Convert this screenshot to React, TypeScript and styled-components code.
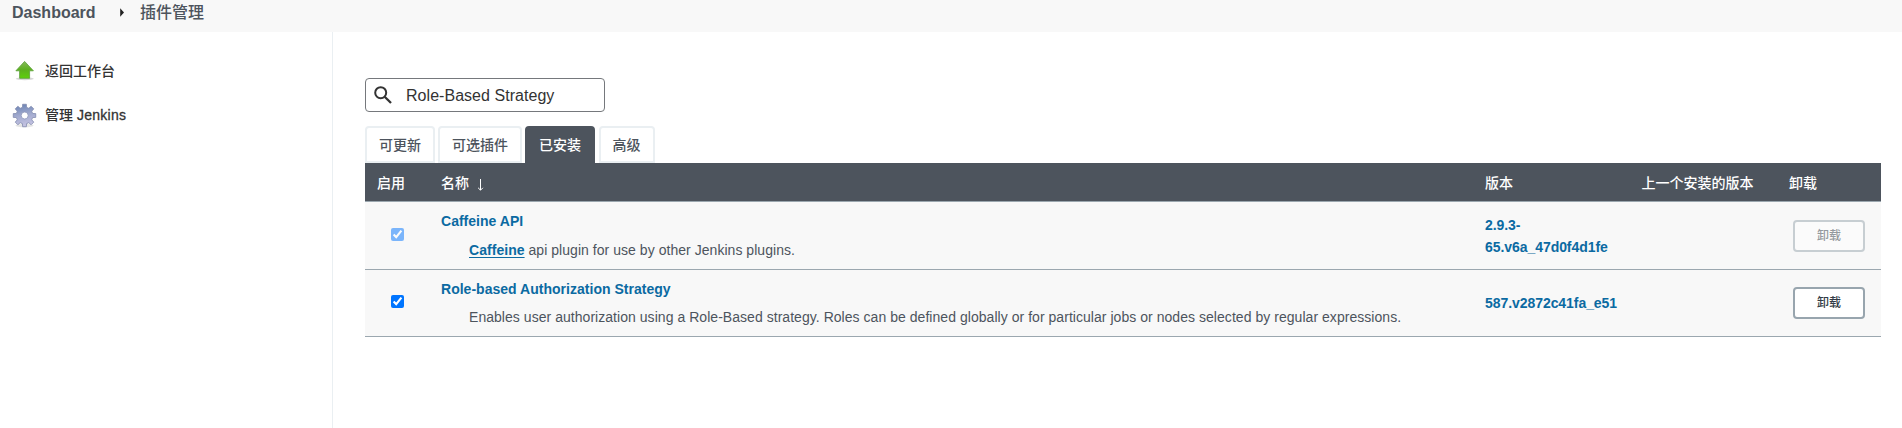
import React from 'react';
import styled, { createGlobalStyle } from 'styled-components';

const GlobalStyle = createGlobalStyle`
  *, *::before, *::after { box-sizing: border-box; }
  body {
    margin: 0;
    background: #fff;
    color: #4d545d;
    font-family: "Liberation Sans", "Noto Sans CJK SC", sans-serif;
    font-size: 14px;
    line-height: 22px;
  }
`;

const Page = styled.div`
  height: 428px;
  display: flex;
  flex-direction: column;
  overflow: hidden;
`;

const Breadcrumbs = styled.nav`
  height: 32px;
  flex: none;
  background: #f8f8f8;
  display: flex;
  align-items: flex-start;
  padding: 1px 0 0 12px;
  font-size: 16px;
  line-height: 24px;
  color: #4d545d;
`;

const Crumb = styled.span<{ $w: number; $strong?: boolean }>`
  width: ${(p) => p.$w}px;
  font-weight: ${(p) => (p.$strong ? 700 : 500)};
  white-space: nowrap;
`;

const Separator = styled.svg`
  margin: 7px 15px 0 25px;
  width: 5px;
  height: 9px;
`;

const Body = styled.div`
  flex: 1;
  display: flex;
`;

const Sidebar = styled.aside`
  width: 333px;
  flex: none;
  border-right: 1px solid #eaeff2;
  padding: 26px 0 0 12px;
`;

const Task = styled.a`
  display: flex;
  align-items: center;
  height: 26px;
  margin-bottom: 18px;
  color: #333;
  font-weight: 500;
  svg { width: 25px; height: 25px; margin-right: 8px; }
`;

const Latin = styled.span`
  letter-spacing: 0.28px;
  -webkit-text-stroke: 0.3px currentColor;
`;

const Main = styled.main`
  flex: 1;
  padding: 46px 21px 0 32px;
`;

const SearchBox = styled.label`
  width: 240px;
  height: 34px;
  border: 1px solid #75787c;
  border-radius: 4px;
  display: flex;
  align-items: center;
  padding-left: 8px;
  svg { width: 18px; height: 18px; flex: none; margin: 0 14px 1px 0; }
`;

const SearchInput = styled.input`
  width: 180px;
  border: 0;
  outline: 0;
  padding: 2px 0 0;
  background: none;
  color: #333;
  font: 16px/24px "Liberation Sans", sans-serif;
  letter-spacing: 0.04px;
`;

const Tabs = styled.div`
  display: flex;
  align-items: flex-end;
  gap: 3px;
  height: 37px;
  margin-top: 14px;
`;

const Tab = styled.a<{ $w: number; $active?: boolean }>`
  width: ${(p) => p.$w}px;
  height: 37px;
  display: flex;
  justify-content: center;
  align-items: center;
  border: 2px solid ${(p) => (p.$active ? '#4d545d' : '#eaeff2')};
  border-radius: 4px 4px 0 0;
  background: ${(p) => (p.$active ? '#4d545d' : '#fff')};
  color: ${(p) => (p.$active ? '#fff' : '#4d545d')};
  font-weight: 500;
  &:last-child { margin-left: 1px; padding-right: 1px; }
`;

const Table = styled.div`
  width: 1516px;
`;

const Row = styled.div<{ $h: number; $head?: boolean }>`
  display: grid;
  grid-template-columns: 76px 1044px 156.5px 147.5px 92px;
  align-items: center;
  height: ${(p) => p.$h}px;
  padding-top: ${(p) => (p.$head ? 2 : 0)}px;
  border-bottom: 1px solid #9ba7af;
  background: ${(p) => (p.$head ? '#4d545d' : '#f8f8f8')};
  color: ${(p) => (p.$head ? '#fff' : '#4d545d')};
  font-weight: ${(p) => (p.$head ? 500 : 400)};
`;

const EnableHead = styled.span`
  padding-left: 12px;
`;

const NameHead = styled.span`
  display: flex;
  align-items: center;
  svg { width: 7px; height: 12px; margin: 3px 0 0 8px; }
`;

const Check = styled.input<{ $dim?: boolean }>`
  width: 13px;
  height: 13px;
  margin: 0 0 ${(p) => (p.$dim ? 2 : 3)}px 26px;
  opacity: ${(p) => (p.$dim ? 0.5 : 1)};
`;

const PluginName = styled.a`
  display: block;
  color: #0b6aa2;
  font-weight: 700;
  letter-spacing: 0.02px;
`;

const Description = styled.div<{ $gap: number }>`
  margin: ${(p) => p.$gap}px 0 0 28px;
  white-space: nowrap;
  letter-spacing: 0.042px;
  a {
    color: #0b6aa2;
    font-weight: 700;
    text-decoration: underline;
    text-underline-offset: 2px;
  }
`;

const Version = styled.a`
  color: #0b6aa2;
  font-weight: 700;
  white-space: nowrap;
  letter-spacing: -0.06px;
`;

const Uninstall = styled.button`
  width: 72px;
  height: 32px;
  margin-left: 4px;
  padding: 0;
  border: 2px solid #98a5ae;
  border-radius: 4px;
  background: #fff;
  color: #333c46;
  font: 500 12px/20px "Liberation Sans", "Noto Sans CJK SC", sans-serif;
  &:disabled { opacity: 0.5; }
`;

const UpIcon = () => (
  <svg viewBox="0 0 25 25">
    <defs>
      <linearGradient id="up" x1="0" y1="0" x2="0" y2="1">
        <stop offset="0" stopColor="#86b95a" />
        <stop offset=".5" stopColor="#5cb01f" />
        <stop offset="1" stopColor="#5ed00c" />
      </linearGradient>
    </defs>
    <ellipse cx="12.8" cy="19.8" rx="9" ry="1.5" fill="#000" opacity=".16" />
    <path d="M12.6 2.4 L21.4 11.8 H17.6 V19.3 H7.6 V11.8 H3.9Z" fill="url(#up)" stroke="#5a9f38" strokeWidth=".8" strokeLinejoin="round" />
  </svg>
);

const polar = (radius: number, degrees: number) => {
  const a = (degrees * Math.PI) / 180;
  return `${(12.5 + radius * Math.sin(a)).toFixed(2)} ${(12.5 - radius * Math.cos(a)).toFixed(2)}`;
};

const gearPath =
  'M' +
  [0, 45, 90, 135, 180, 225, 270, 315]
    .map((t) => [polar(8.4, t - 14), polar(11.4, t - 9.5), polar(11.4, t + 9.5), polar(8.4, t + 14)].join(' L'))
    .join(' L') +
  'Z';

const GearIcon = () => (
  <svg viewBox="0 0 25 25">
    <defs>
      <linearGradient id="gear" x1=".4" y1="0" x2=".6" y2="1">
        <stop offset="0" stopColor="#6d85b5" />
        <stop offset=".45" stopColor="#a0a9ce" />
        <stop offset="1" stopColor="#c9c6e4" />
      </linearGradient>
    </defs>
    <ellipse cx="12.5" cy="22.5" rx="9" ry="1.8" fill="#000" opacity=".1" />
    <path d={gearPath} fill="url(#gear)" stroke="#838cae" strokeWidth=".8" strokeLinejoin="round" />
    <circle cx="12.7" cy="12.5" r="3.5" fill="#fff" stroke="#8b94b9" strokeWidth=".8" />
  </svg>
);

export default function App() {
  return (
    <Page>
      <GlobalStyle />
      <Breadcrumbs>
        <Crumb $w={83} $strong>Dashboard</Crumb>
        <Separator viewBox="0 0 5 9"><path d="M.2 .3 L4 4.5 L.2 8.7Z" fill="#222" /></Separator>
        <Crumb $w={64}>插件管理</Crumb>
      </Breadcrumbs>
      <Body>
        <Sidebar>
          <Task><UpIcon />返回工作台</Task>
          <Task><GearIcon /><span>管理 <Latin>Jenkins</Latin></span></Task>
        </Sidebar>
        <Main>
          <SearchBox>
            <svg viewBox="0 0 18 18" fill="none" stroke="#333" strokeWidth="2">
              <circle cx="6.7" cy="6.7" r="5.5" />
              <path d="M10.7 10.7 L17 17" strokeWidth="2.3" />
            </svg>
            <SearchInput defaultValue="Role-Based Strategy" />
          </SearchBox>
          <Tabs>
            <Tab $w={70}>可更新</Tab>
            <Tab $w={84}>可选插件</Tab>
            <Tab $w={70} $active>已安装</Tab>
            <Tab $w={56}>高级</Tab>
          </Tabs>
          <Table>
            <Row $h={39} $head>
              <EnableHead>启用</EnableHead>
              <NameHead>
                名称
                <svg viewBox="0 0 7 12" fill="none" stroke="#fff" strokeWidth="1"><path d="M3.5 0 V11 M1.1 8.8 L3.5 11.2 L5.9 8.8" /></svg>
              </NameHead>
              <span>版本</span>
              <span>上一个安装的版本</span>
              <span>卸载</span>
            </Row>
            <Row $h={68}>
              <Check type="checkbox" defaultChecked $dim />
              <div>
                <PluginName>Caffeine API</PluginName>
                <Description $gap={7}><a>Caffeine</a> api plugin for use by other Jenkins plugins.</Description>
              </div>
              <Version>2.9.3-<br />65.v6a_47d0f4d1fe</Version>
              <span />
              <Uninstall disabled>卸载</Uninstall>
            </Row>
            <Row $h={67}>
              <Check type="checkbox" defaultChecked />
              <div>
                <PluginName>Role-based Authorization Strategy</PluginName>
                <Description $gap={6}>Enables user authorization using a Role-Based strategy. Roles can be defined globally or for particular jobs or nodes selected by regular expressions.</Description>
              </div>
              <Version>587.v2872c41fa_e51</Version>
              <span />
              <Uninstall>卸载</Uninstall>
            </Row>
          </Table>
        </Main>
      </Body>
    </Page>
  );
}
